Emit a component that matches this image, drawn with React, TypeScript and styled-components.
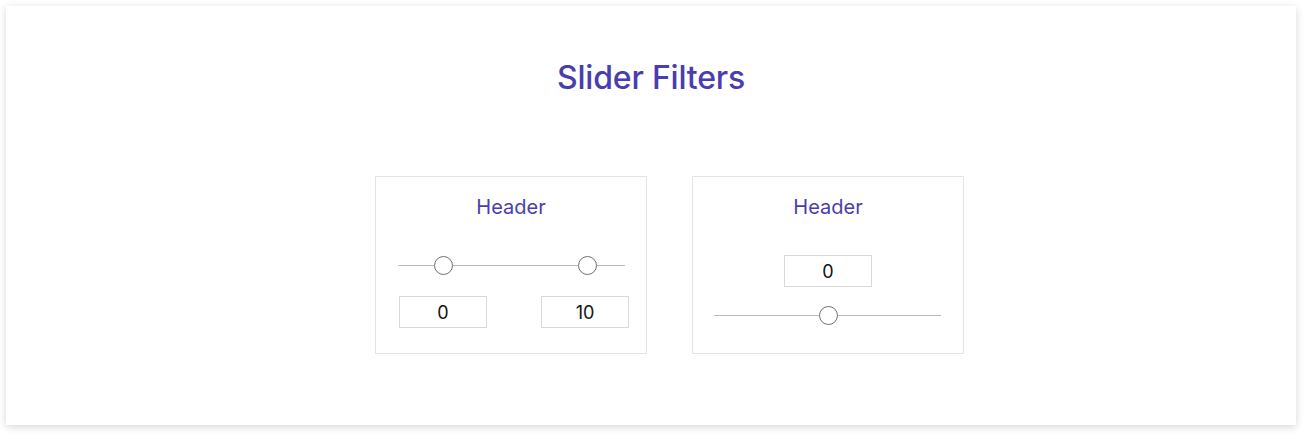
import React from "react";
import styled, { createGlobalStyle } from "styled-components";

const GlobalStyle = createGlobalStyle`
  html, body {
    margin: 0;
    padding: 0;
    background: #ffffff;
    font-family: Inter, "Noto Sans", "Liberation Sans", sans-serif;
  }
  * { box-sizing: border-box; }
`;

const Page = styled.div`
  padding: 6px 14px 14px 6px;
`;

const Panel = styled.section`
  width: 1290px;
  height: 419px;
  background: #ffffff;
  box-shadow: 0 2px 8px rgba(0, 0, 0, 0.16);
  display: flex;
  flex-direction: column;
  align-items: center;
`;

const Title = styled.h1`
  margin: 50px 0 0 0;
  font-size: 32px;
  line-height: 44px;
  font-weight: 500;
  color: #4a3dad;
  letter-spacing: -0.2px;
`;

const CardRow = styled.div`
  display: flex;
  gap: 45px;
  margin-top: 76px;
  padding-left: 37px;
`;

const Card = styled.div`
  width: 272px;
  height: 178px;
  border: 1px solid #e4e4e4;
  display: flex;
  flex-direction: column;
`;

const CardHeader = styled.h2`
  margin: 18px 0 0 0;
  font-size: 20px;
  line-height: 24px;
  font-weight: 400;
  text-align: center;
  color: #4a3dad;
`;

const Track = styled.div<{ $left: number; $top: number }>`
  position: relative;
  width: 227px;
  height: 1px;
  background: #b9b9bf;
  margin-left: ${(p) => p.$left}px;
  margin-top: ${(p) => p.$top}px;
  flex-shrink: 0;
`;

const Thumb = styled.div`
  position: absolute;
  top: -9px;
  width: 19px;
  height: 19px;
  margin-left: -9.5px;
  border-radius: 50%;
  background: #ffffff;
  border: 1px solid #6f6f78;
`;

const InputRow = styled.div`
  display: flex;
  justify-content: space-between;
  margin: 30px 17px 0 23px;
`;

const ValueBox = styled.input`
  width: 88px;
  height: 32px;
  border: 1px solid #d9d9d9;
  border-radius: 0;
  text-align: center;
  font-family: Inter, "Noto Sans", "Liberation Sans", sans-serif;
  font-size: 18px;
  color: #111111;
  background: #ffffff;
  padding: 0;
  outline: none;
`;

const CenterBox = styled.div`
  display: flex;
  justify-content: center;
  margin-top: 36px;
`;

type SliderProps = { left: number; top: number; positions: number[] };

function Slider({ left, top, positions }: SliderProps) {
  return (
    <Track $left={left} $top={top}>
      {positions.map((pos, i) => (
        <Thumb key={i} style={{ left: `${pos * 100}%` }} />
      ))}
    </Track>
  );
}

export default function App() {
  return (
    <>
      <GlobalStyle />
      <Page>
        <Panel>
          <Title>Slider Filters</Title>
          <CardRow>
            <Card>
              <CardHeader>Header</CardHeader>
              <Slider left={22} top={46} positions={[45 / 227, 189 / 227]} />
              <InputRow>
                <ValueBox readOnly value="0" />
                <ValueBox readOnly value="10" />
              </InputRow>
            </Card>
            <Card>
              <CardHeader>Header</CardHeader>
              <CenterBox>
                <ValueBox readOnly value="0" />
              </CenterBox>
              <Slider left={21} top={28} positions={[114 / 227]} />
            </Card>
          </CardRow>
        </Panel>
      </Page>
    </>
  );
}
